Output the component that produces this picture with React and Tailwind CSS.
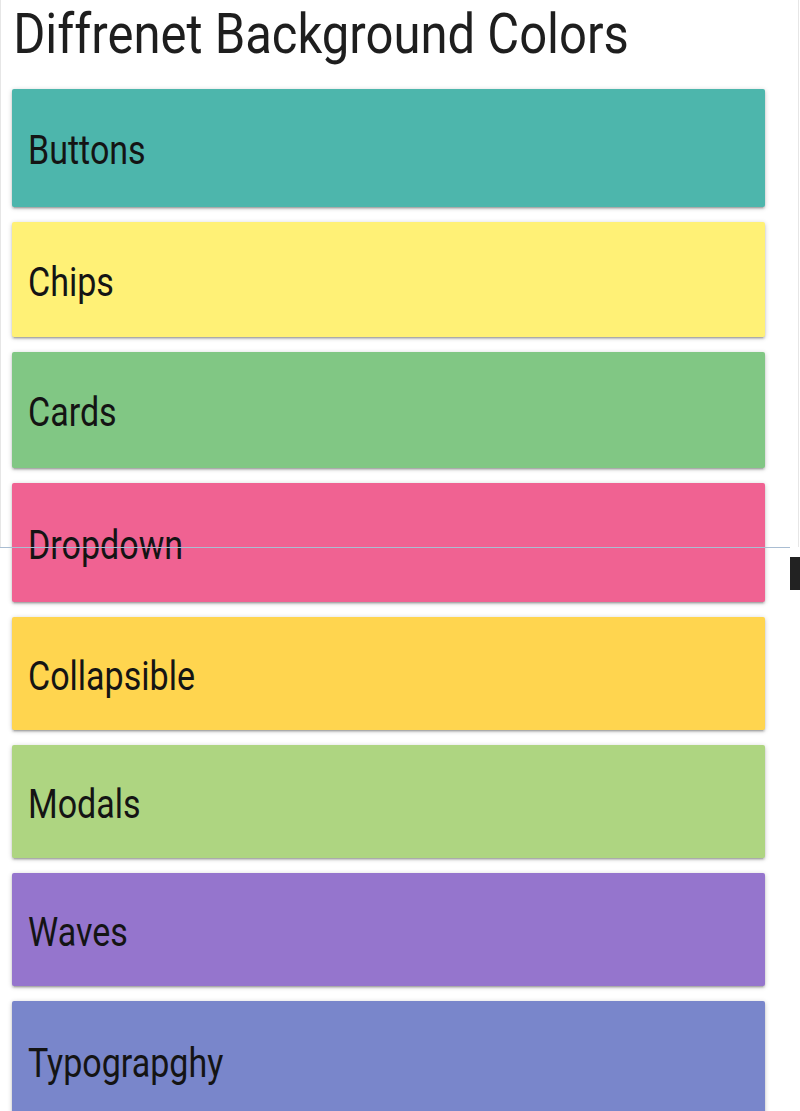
import React from 'react';

const sections = [
    { name: 'Buttons', color: 'bg-[#4db6ac]', size: 'h-[118px]' },
    { name: 'Chips', color: 'bg-[#fff176]', size: 'h-[115px]' },
    { name: 'Cards', color: 'bg-[#81c784]', size: 'h-[116px]' },
    { name: 'Dropdown', color: 'bg-[#f06292]', size: 'h-[119px]' },
    { name: 'Collapsible', color: 'bg-[#ffd54f]', size: 'h-[113px]' },
    { name: 'Modals', color: 'bg-[#aed581]', size: 'h-[113px]' },
    { name: 'Waves', color: 'bg-[#9575cd]', size: 'h-[113px]' },
    { name: 'Typograpghy', color: 'bg-[#7986cb]', size: 'h-[120px]' },
];

function ColorCard({ name, color, size }) {
    return (
        <div
            className={`${color} ${size} flex items-center pt-[6px] pl-[16px] rounded-[2px] shadow-[0_2px_2px_0_rgba(0,0,0,0.14),0_3px_1px_-2px_rgba(0,0,0,0.12),0_1px_5px_0_rgba(0,0,0,0.2)]`}
        >
            <span className="block origin-left scale-x-[0.83] text-[41px] leading-normal text-[#141414] whitespace-nowrap">
                {name}
            </span>
        </div>
    );
}

export default function App() {
    return (
        <div className="relative min-h-[1111px] bg-white overflow-hidden font-['Roboto',sans-serif]">
            {/* frame of the overlapping window */}
            <div className="absolute left-0 top-0 w-[799px] h-[547px] border-l border-r border-[#e6e6e6] pointer-events-none" />
            <div className="absolute left-0 top-[547px] w-[790px] h-px bg-[#a9bdd2] z-10" />
            <div className="absolute left-[790px] top-[557px] w-[10px] h-[33px] bg-[#222222] z-10" />

            <h1 className="pl-[15px] origin-left scale-x-[0.875] text-[56px] leading-[68px] text-[#1e1e1e] whitespace-nowrap">
                Diffrenet Background Colors
            </h1>

            <div className="ml-[12px] mt-[21px] w-[753px] flex flex-col gap-[15px]">
                {sections.map((s) => (
                    <ColorCard key={s.name} {...s} />
                ))}
            </div>
        </div>
    );
}
